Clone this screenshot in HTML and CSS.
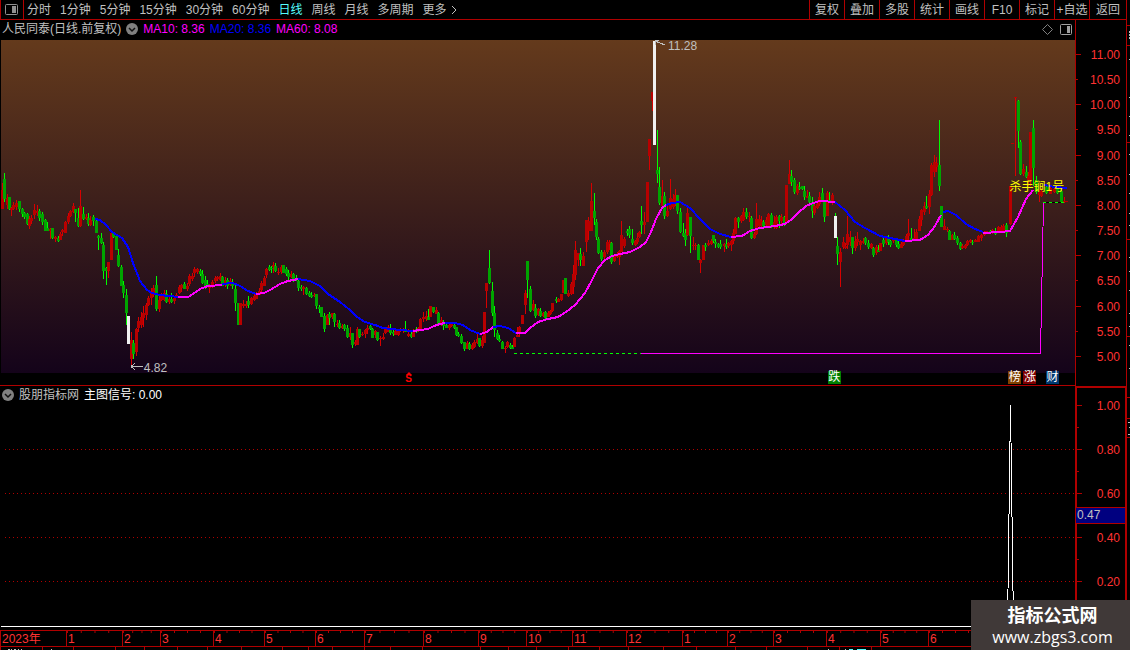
FILE: index.html
```
<!DOCTYPE html>
<html lang="zh-CN">
	<head>
		<meta charset="UTF-8">
		<meta name="viewport" content="width=device-width,initial-scale=1.0">
		<title>人民同泰</title>
		<link rel="stylesheet" href="styles.css">
	</head>
	<body>
		<header class="toolbar">
			<button class="toggle" aria-label="侧栏">
				<svg width="13" height="11" viewBox="0 0 13 11"><rect x="0.5" y="0.5" width="12" height="10" rx="1" fill="none" stroke="#909090"/><rect x="7" y="2" width="4" height="7" fill="#909090"/></svg>
			</button>
			<nav class="periods">
				<button>分时</button>
				<button>1分钟</button>
				<button>5分钟</button>
				<button>15分钟</button>
				<button>30分钟</button>
				<button>60分钟</button>
				<button class="active">日线</button>
				<button>周线</button>
				<button>月线</button>
				<button>多周期</button>
				<button class="more">更多<svg width="6" height="10" viewBox="0 0 6 10"><path d="M1 1L5 5L1 9" fill="none" stroke="#c0c0c0"/></svg></button>
			</nav>
			<div class="tools">
				<button>复权</button>
				<button>叠加</button>
				<button>多股</button>
				<button>统计</button>
				<button>画线</button>
				<button>F10</button>
				<button>标记</button>
				<button>+自选</button>
				<button>返回</button>
			</div>
		</header>

		<main>
			<div class="charts">
				<!-- K线主图 -->
				<section class="panel price">
					<div class="content">
						<div class="info">
							<span>人民同泰(日线.前复权)</span>
							<svg class="drop" width="12" height="12" viewBox="0 0 12 12"><circle cx="6" cy="6" r="6" fill="#808080"/><path d="M3 5L6 8L9 5" fill="none" stroke="#101010" stroke-width="1.5"/></svg>
							<span class="magenta">MA10: 8.36</span>
							<span class="blue">MA20: 8.36</span>
							<span class="magenta">MA60: 8.08</span>
							<span class="info-icons">
								<svg width="11" height="11" viewBox="0 0 11 11"><path d="M5.5 0.5L10.5 5.5L5.5 10.5L0.5 5.5Z" fill="none" stroke="#808080"/></svg>
								<svg width="12" height="11" viewBox="0 0 12 11"><rect x="0.5" y="0.5" width="11" height="10" rx="1" fill="none" stroke="#a0a0a0"/><rect x="7" y="2" width="3" height="7" fill="#a0a0a0"/></svg>
							</span>
						</div>
						<div class="plot">
							<svg id="kline" viewBox="1 40 1074 333" preserveAspectRatio="none">
								<g id="candles"></g>
								<g id="averages"></g>
								<path class="dash" d="M514 353.5H641"/>
								<path class="signal" d="M641 353.5H1040.5L1043.5 202"/>
								<path class="dash-back" d="M1043 202.5H1064"/>
								<path class="dash" d="M1043 202.5H1064"/>
								<path class="arrow" d="M131 366.5H143M131 366.5L135 363.5M131 366.5L135 369.5M655 41L665 45M655 41L659 40.5M655 41L656 45"/>
							</svg>
							<span class="note low">4.82</span>
							<span class="note high">11.28</span>
							<span class="note tip">杀手锏1号</span>
						</div>
						<div class="events">
							<span class="event split">S</span>
							<span class="event fall">跌</span>
							<span class="event list">榜</span>
							<span class="event rise">涨</span>
							<span class="event report">财</span>
						</div>
					</div>
					<ul class="axis">
						<li class="major">11.00</li>
						<li>10.50</li>
						<li class="major">10.00</li>
						<li>9.50</li>
						<li class="major">9.00</li>
						<li>8.50</li>
						<li class="major">8.00</li>
						<li>7.50</li>
						<li class="major">7.00</li>
						<li>6.50</li>
						<li class="major">6.00</li>
						<li>5.50</li>
						<li class="major">5.00</li>
					</ul>
				</section>

				<!-- 副图指标 -->
				<section class="panel sub">
					<div class="content">
						<svg id="signal" viewBox="1 386 1074 244" preserveAspectRatio="none">
							<path class="grid" d="M5 449.5H1075M5 493.5H1075M5 537.5H1075M5 581.5H1075"/>
							<path class="white" d="M1 626.5H1007.500L1010.500 405L1013.500 626.5H1075"/>
						</svg>
						<div class="info">
							<svg class="drop" width="12" height="12" viewBox="0 0 12 12"><circle cx="6" cy="6" r="6" fill="#808080"/><path d="M3 5L6 8L9 5" fill="none" stroke="#101010" stroke-width="1.5"/></svg>
							<span>股朋指标网</span>
							<span class="white-text">主图信号: 0.00</span>
						</div>
					</div>
					<ul class="axis">
						<li class="major">1.00</li>
						<li></li>
						<li class="major">0.80</li>
						<li></li>
						<li class="major">0.60</li>
						<li></li>
						<li class="major">0.40</li>
						<li></li>
						<li class="major">0.20</li>
					</ul>
					<span class="current">0.47</span>
				</section>
			</div>
			<aside class="strip">
				<svg width="3" height="610" viewBox="1127 20 3 610">
					<path d="M1127 25.500h3M1127 45.500h3M1127 142.500h3M1127 239.500h3M1127 336.500h3M1127 397.500h3M1127 418.500h3M1127 437.500h3" stroke="#b00000"/>
					<path d="M1129.500 31v2M1129.500 34v2M1129.500 37v2M1129.500 59v1M1129.500 97v1M1129.500 116v1M1129.500 135v1M1129.500 154v1M1129.500 174v1M1129.500 193v1M1129.500 213v1M1129.500 225v1M1129.500 257v1M1129.500 271v1M1129.500 290v1M1129.500 313v1M1129.500 326v1M1129.500 345v1M1129.500 368v1M1128 422.500h2M1129.500 427v1M1128 434.500h2" stroke="#c0c0c0"/>
				</svg>
			</aside>
		</main>

		<ol class="months">
			<li>2023年</li>
			<li>1</li>
			<li>2</li>
			<li>3</li>
			<li>4</li>
			<li>5</li>
			<li>6</li>
			<li>7</li>
			<li>8</li>
			<li>9</li>
			<li>10</li>
			<li>11</li>
			<li>12</li>
			<li>1</li>
			<li>2</li>
			<li>3</li>
			<li>4</li>
			<li>5</li>
			<li>6</li>
		</ol>
		<footer>
			<svg width="970" height="3" viewBox="0 647 970 3">
				<path d="M.5 647v3M42.500 647v3M73.500 647v3M115.500 647v3M144.500 647v3M177.500 647v3M207.500 647v3M241.500 647v3M282.500 647v3M308.500 647v3M332.500 647v3M364.500 647v3M390.500 647v3M422.500 647v3M480.500 647v3M508.500 647v3M536.500 647v3M568.500 647v3M599.500 647v3M628.500 647v3M663.500 647v3M696.500 647v3M735.500 647v3M766.500 647v3M807.500 647v3M839.500 647v3M871.500 647v3" stroke="#b00000"/>
				<path d="M8 649.500h2M11 649.500h1M14 649.500h2M18 649.500h1M21 649.500h1M51 649.500h1M828 649.500h1M845 649.500h1" stroke="#c0c0c0"/>
				<path d="M849 649.500h4M857 649.500h9" stroke="#54fcfc"/>
			</svg>
		</footer>

		<div class="watermark">
			<strong>指标公式网</strong>
			<span>www.zbgs3.com</span>
		</div>
		<script src="chart.js"></script>
	</body>
</html>
```

FILE: styles.css
```
*{
	padding: 0;
	margin: 0;
	box-sizing: border-box;
}
body{
	display: flex;
	flex-direction: column;
	height: 100vh;
	overflow: hidden;
	background: #000;
	color: #c0c0c0;
	font: 12px/14px "Liberation Sans", "Noto Sans CJK SC", sans-serif;
}
ul, ol{
	list-style: none;
}
svg{
	display: block;
	flex: none;
}
button{
	border: 0;
	background: none;
	color: inherit;
	font: inherit;
	white-space: nowrap;
}

/* 工具栏 */
.toolbar{
	display: flex;
	flex: none;
	height: 20px;
	margin-right: 3px;
	border: solid #b00000;
	border-width: 0 1px 1px;
}
.toggle{
	width: 23px;
	padding-left: 4px;
	border-right: 1px solid #b00000;
}
.periods{
	display: flex;
	flex: 1;
	gap: 9px;
	padding-left: 3px;
}
.periods .active{
	color: #54fcfc;
}
.more{
	display: flex;
	align-items: center;
	gap: 4px;
}
.tools{
	display: flex;
}
.tools button{
	width: 35px;
	border-left: 1px solid #b00000;
}
.tools button:last-child{
	width: 37px;
}

main{
	display: flex;
	flex: 1;
	min-height: 0;
}
.charts{
	display: flex;
	flex: 1;
	flex-direction: column;
	min-width: 0;
}
.panel{
	position: relative;
	display: flex;
	min-height: 0;
}
.price{
	flex: 366 1 0;
}
.sub{
	flex: 244 1 0;
}
.content{
	position: relative;
	display: flex;
	flex: 1;
	flex-direction: column;
	min-width: 0;
}
.price .content{
	border-bottom: 1px solid #b00000;
}
.info{
	display: flex;
	flex: none;
	align-items: center;
	gap: 5px;
	height: 20px;
	padding: 0 3px 2px 2px;
}
.info-icons{
	display: flex;
	gap: 7px;
	margin-left: auto;
}
.magenta{
	color: #f0f;
}
.blue{
	color: #00f;
}
.white-text{
	color: #fff;
}

.plot{
	position: relative;
	flex: 1;
	min-height: 0;
	margin-left: 1px;
	background: linear-gradient(#643a1c, #14031a);
}
.plot svg{
	width: 100%;
	height: 100%;
	shape-rendering: crispEdges;
}
.up{
	fill: #b80000;
}
.up .wick{
	fill: #d80000;
}
.down{
	fill: #00a400;
}
.down .wick{
	fill: #00fc00;
}
.limit{
	fill: #f0f0f0;
}
#averages polyline{
	fill: none;
	stroke: #f0f;
	stroke-width: 2;
}
#averages .fall-line{
	stroke: #00f;
}
.dash, .dash-back, .signal, .arrow{
	fill: none;
	stroke: #0f0;
}
.dash{
	stroke-dasharray: 3 3;
}
.dash-back{
	stroke: #000;
}
.signal{
	stroke: #f0f;
}
.arrow{
	stroke: #c0c0c0;
}
.note{
	position: absolute;
	white-space: nowrap;
}
.low{
	left: 13.3%;
	bottom: -2px;
}
.high{
	left: 62.1%;
	top: -1px;
}
.tip{
	left: 93.9%;
	top: 42%;
	color: #ff0;
}

.events{
	position: relative;
	flex: none;
	height: 12px;
}
.event{
	position: absolute;
	bottom: 1px;
	width: 13px;
	height: 13px;
	color: #fff;
	line-height: 13px;
	text-align: center;
}
.split{
	left: 37.4%;
	bottom: 0;
	color: #f00;
	font-size: 10px;
	font-weight: bold;
}
.split::before{
	content: "";
	position: absolute;
	left: 4px;
	top: 0;
	border: solid transparent;
	border-width: 0 3px 3px;
	border-bottom-color: #f00;
}
.fall{
	left: 77%;
	background: #008000;
}
.list{
	left: 93.8%;
	background: #804000;
}
.rise{
	left: 95.2%;
	background: #800000;
}
.report{
	left: 97.3%;
	background: #003870;
}

/* 右侧刻度 */
.axis{
	display: flex;
	flex: none;
	flex-direction: column;
	justify-content: space-between;
	width: 51px;
	padding: 28px 6px 22px 0;
	border-left: 1px solid #b00000;
	color: #ff3232;
	text-align: right;
}
.axis li{
	position: relative;
	height: 14px;
}
.axis li::before{
	content: "";
	position: absolute;
	left: 0;
	top: 6px;
	width: 2px;
	height: 1px;
	background: #b00000;
}
.axis .major::before{
	width: 5px;
}
.sub .axis{
	padding: 11px 5px 41px 0;
	border: solid #b00000;
	border-width: 2px 1px 0 2px;
}
.current{
	position: absolute;
	right: 1px;
	top: 49.5%;
	width: 49px;
	height: 17px;
	padding-left: 1px;
	border: solid #b00000;
	border-width: 1px 0;
	background: #000080;
	line-height: 15px;
}
.strip{
	flex: none;
	width: 4px;
	border-left: 1px solid #b00000;
	overflow: hidden;
}

#signal{
	position: absolute;
	left: 1px;
	top: 0;
	width: calc(100% - 1px);
	height: 100%;
	shape-rendering: crispEdges;
}
.sub .info{
	position: relative;
	height: 17px;
	padding-bottom: 0;
}
.grid{
	stroke: #b00000;
	stroke-dasharray: 1 3;
}
.white{
	fill: none;
	stroke: #fff;
}

/* 日期轴 */
.months{
	display: grid;
	flex: none;
	grid-template-columns: 66fr 56fr 38fr 53fr 51fr 51fr 49fr 59fr 55fr 48fr 46fr 54fr 56fr 45fr 46fr 53fr 54fr 48fr 202fr;
	height: 17px;
	border: solid #b00000;
	border-width: 1px 0;
	color: #ff3232;
	line-height: 16px;
}
.months li{
	padding-left: 1px;
	border-left: 1px solid #b00000;
}
.months li:not(:first-child){
	background: linear-gradient(90deg, #b00000 1px, transparent 1px) 0 0 / 25% 2px repeat-x;
}
.months li:last-child{
	background-size: 13px 2px;
}
footer{
	flex: none;
	height: 3px;
}

.watermark{
	position: fixed;
	right: 0;
	bottom: 0;
	display: flex;
	flex-direction: column;
	align-items: center;
	width: 159px;
	height: 50px;
	padding: 1px 0 0 4px;
	background: #403938;
	color: #fff;
	font: 16px/21px "Open Sans", "Noto Sans CJK SC", sans-serif;
}
.watermark strong{
	font-family: "Noto Sans CJK SC", sans-serif;
	font-size: 18px;
	line-height: 26px;
}
```

FILE: chart.js
```
// 每根K线: x 最高 实体上 实体下 最低 类型(r涨 g跌 w涨跌停)
var data = `
2 183 190 209 209 r,4 173 179 199 202 g,7 194 198 205 209 r,9 197 197 209 210 g,11 207 208 210 216 r,13 202 205 209 210 r,
16 200 203 207 210 r,19 201 201 209 212 g,22 208 209 214 217 g,24 212 213 217 219 g,27 213 214 224 225 g,29 216 219 226 229 r,
31 215 218 221 224 r,34 204 210 215 219 r,37 205 211 213 216 r,39 209 211 218 221 g,42 212 214 222 225 g,45 219 220 231 231 g,
47 222 228 231 231 g,50 228 229 231 239 r,52 228 228 238 239 g,55 236 237 239 242 r,58 236 238 241 242 g,60 232 234 240 240 r,
62 229 230 232 236 r,65 221 222 233 233 r,68 213 216 222 224 r,70 210 211 216 217 r,73 203 206 212 213 r,75 209 209 213 222 g,
78 208 218 226 227 g,80 190 206 226 227 r,83 207 214 219 220 g,86 214 217 219 220 r,88 213 218 224 226 g,90 216 220 225 226 r,
93 215 217 221 226 g,96 218 221 233 233 g,98 235 236 238 250 g,101 233 238 243 244 g,103 242 245 271 279 g,106 267 268 271 285 g,
108 262 262 271 278 r,111 233 233 260 260 r,113 232 232 237 238 g,116 235 236 250 250 g,118 249 255 266 267 g,121 265 267 286 286 g,
123 281 285 293 298 g,126 289 295 313 325 g,128 316 316 344 344 w,131 332 340 359 365 r,133 340 343 354 359 g,136 328 329 352 356 r,
138 317 321 328 332 r,141 312 317 325 328 r,143 306 313 318 327 r,146 303 305 315 320 r,148 296 298 305 306 r,151 288 293 298 305 r,
153 285 288 295 297 r,156 276 285 309 311 g,159 296 300 309 312 r,161 293 294 300 301 r,164 290 293 300 301 r,166 290 294 302 303 g,
169 297 299 302 304 r,171 293 299 302 303 g,174 297 298 301 304 r,176 293 295 298 298 r,179 285 287 293 294 r,181 284 285 288 292 r,
184 282 284 289 289 g,187 283 286 289 291 r,189 274 276 284 286 r,192 273 276 279 281 r,194 267 269 273 277 r,197 268 269 272 274 r,
200 269 271 274 276 g,202 270 274 283 284 g,205 276 280 286 289 g,207 280 284 287 287 g,209 284 285 288 293 r,212 280 282 286 288 r,
215 276 278 281 283 r,217 276 277 279 281 r,220 273 276 280 281 r,222 276 277 286 286 g,225 277 280 284 287 r,227 278 280 286 289 g,
230 278 281 285 286 r,232 279 282 286 289 g,235 285 289 303 311 g,238 303 303 325 325 g,240 303 303 325 325 r,243 300 304 306 308 r,
246 301 304 306 308 r,248 296 301 305 308 g,251 297 298 304 305 r,254 294 296 300 301 r,256 292 294 299 299 r,259 288 291 295 295 r,
261 281 283 290 294 r,264 276 278 286 286 r,266 268 269 275 278 r,269 265 267 270 271 g,271 266 268 269 273 g,273 262 265 267 273 r,
275 263 266 271 272 g,278 268 272 273 275 r,281 265 267 272 274 r,283 265 265 273 273 g,286 267 269 274 276 g,288 270 273 277 280 g,
291 271 274 277 278 r,293 273 274 280 282 g,296 275 278 280 281 g,298 279 281 288 291 g,301 285 287 289 291 g,303 286 287 289 295 r,
306 287 288 294 295 g,309 291 293 296 297 g,311 292 295 297 298 g,314 293 295 296 297 r,316 294 294 306 309 g,319 305 307 309 313 g,
321 307 307 317 317 g,324 313 316 329 332 g,327 314 315 325 325 r,329 312 314 318 325 g,332 313 313 317 319 r,334 313 314 322 327 g,
337 320 324 325 327 r,339 320 323 328 329 g,342 324 326 328 329 r,344 324 325 329 331 g,347 325 328 337 338 g,350 327 333 337 340 r,
352 333 333 345 348 g,355 340 342 344 346 r,357 327 329 345 345 r,359 329 329 337 338 g,362 332 334 335 336 r,365 329 330 334 338 r,
367 325 328 330 334 r,370 325 326 329 330 g,372 328 329 338 338 g,375 330 331 335 338 r,377 332 332 340 341 g,380 336 338 339 346 r,
383 333 337 339 340 r,385 327 328 333 334 r,388 325 327 332 332 r,390 324 328 333 335 g,393 329 332 334 336 g,395 330 331 335 335 r,
398 330 331 335 336 r,400 328 329 331 332 r,403 328 329 331 333 r,405 321 330 332 332 g,408 329 334 336 337 r,411 332 334 337 338 g,
413 329 331 337 337 r,416 327 329 332 333 g,418 327 328 330 332 r,420 318 319 331 331 r,423 312 317 319 322 r,426 311 316 319 321 r,
428 309 317 320 320 g,430 306 306 317 317 r,433 307 307 312 313 g,436 307 310 314 314 r,438 312 313 325 326 g,441 317 320 325 326 r,
443 320 322 326 330 g,446 322 325 328 328 g,449 324 325 328 330 r,451 322 324 326 327 r,454 323 325 328 329 g,456 327 327 335 336 g,
458 332 334 336 337 g,461 334 336 343 344 g,464 342 342 349 351 g,467 341 343 349 349 r,469 342 344 349 350 g,472 343 345 349 350 r,
474 340 342 347 348 r,477 334 339 343 344 r,479 338 338 346 347 g,482 336 340 346 348 r,484 312 312 343 343 r,486 283 283 291 308 r,
489 250 268 283 284 g,492 282 291 313 316 g,494 306 313 330 337 g,497 330 333 339 340 g,499 335 339 341 342 g,502 341 342 349 349 g,
505 346 348 349 353 r,507 341 342 347 348 r,510 343 345 348 349 g,512 345 347 349 349 g,514 337 338 347 347 r,517 327 335 337 337 r,
519 326 327 334 337 r,522 315 315 324 324 r,525 290 293 305 314 r,527 261 261 280 298 g,530 286 289 311 312 g,533 300 304 310 311 r,
535 304 308 316 318 g,538 308 309 315 316 r,540 308 311 316 317 g,543 312 313 316 317 r,545 311 312 318 319 g,548 311 313 317 317 r,
550 310 311 314 315 r,552 303 303 311 312 r,556 297 299 301 303 g,558 298 299 302 302 r,561 294 294 300 301 r,563 280 280 293 293 r,
565 278 278 294 294 g,568 290 293 296 297 r,571 282 284 294 295 r,573 265 274 287 294 r,575 241 250 275 280 r,578 253 253 260 266 r,
580 248 254 260 266 g,583 252 256 266 266 r,586 220 220 242 252 r,588 217 221 231 240 r,591 183 201 231 231 r,594 193 211 218 225 g,
596 219 222 237 240 g,598 237 239 253 254 g,601 250 252 259 261 g,604 250 252 257 259 r,607 240 242 252 254 r,609 240 242 244 250 r,
611 242 243 262 264 g,614 254 256 261 262 r,617 252 255 257 258 r,619 250 251 257 265 r,621 221 235 252 252 r,624 237 239 246 248 r,
627 229 231 233 236 g,629 226 229 235 238 g,632 229 239 243 245 g,635 240 241 245 246 r,637 233 238 242 244 r,639 231 232 237 238 r,
641 206 221 225 234 g,644 212 222 225 234 r,647 182 182 222 222 r,649 139 139 156 170 r,652 92 92 101 111 r,657 130 170 174 183 g,
654 41 41 145 145 w,659 167 187 203 205 g,662 180 196 206 206 r,664 192 196 216 219 g,667 205 211 216 217 r,670 179 198 209 210 r,
673 194 199 207 209 r,675 189 195 204 206 r,677 195 195 211 214 g,680 208 212 232 233 g,683 223 233 236 237 g,685 229 233 240 246 g,
687 206 213 235 236 r,690 217 217 236 253 g,693 237 245 246 250 r,695 243 245 246 250 r,698 244 245 260 260 g,700 259 260 263 273 r,
703 245 245 260 260 r,705 243 245 247 251 g,708 240 243 245 246 r,711 239 241 244 245 r,713 235 235 241 243 g,715 239 242 244 248 g,
718 243 244 247 248 g,720 240 244 247 249 g,724 243 244 246 252 r,726 239 244 247 249 g,728 242 243 246 248 r,731 240 241 245 251 r,
733 229 233 241 244 r,735 217 218 234 234 r,738 217 218 222 228 g,741 215 216 221 223 r,743 208 212 220 221 r,746 208 212 217 219 g,
749 212 216 217 222 r,751 216 218 238 239 g,754 232 234 238 239 r,756 203 219 234 235 r,759 215 219 226 227 r,761 216 221 226 228 r,
763 220 222 226 227 g,766 217 220 225 226 r,768 213 214 226 227 r,771 213 215 226 228 g,774 216 222 227 229 r,776 215 217 228 229 r,
779 215 216 221 228 g,781 214 217 221 224 r,784 216 217 225 226 g,786 185 185 223 223 r,789 160 174 184 184 r,791 170 176 182 186 g,
794 178 180 192 194 g,797 184 186 193 195 r,799 182 187 189 190 g,802 186 186 189 190 g,804 186 191 197 200 g,807 190 196 198 198 r,
809 192 196 202 205 g,812 197 202 211 218 g,814 204 206 213 215 r,817 200 204 208 209 r,819 192 197 204 206 r,822 188 193 200 201 g,
824 200 200 217 222 g,827 191 193 216 216 r,829 192 200 201 203 g,832 193 195 201 205 r,835 213 216 220 238 g,835 216 216 238 238 w,
837 237 246 254 265 g,840 248 252 262 287 r,843 237 242 247 249 r,845 243 246 248 249 r,847 216 234 245 249 r,850 231 237 242 246 r,
852 237 237 248 254 g,855 236 241 248 251 r,857 232 239 242 246 r,860 240 241 245 250 r,863 238 241 243 244 r,865 237 238 243 245 g,
868 240 243 247 249 g,871 243 244 248 249 r,873 247 248 255 257 g,876 245 247 253 255 r,878 245 250 252 252 g,880 243 243 251 251 r,
883 238 240 244 247 g,886 237 238 243 245 r,888 235 237 242 245 g,890 240 241 245 247 g,893 239 240 241 243 r,896 240 240 245 247 g,
898 241 244 248 249 g,901 242 244 248 248 r,903 239 240 245 246 r,906 234 236 241 242 r,908 219 233 236 242 r,911 228 238 240 240 g,
914 229 238 240 240 r,916 229 232 240 241 r,919 216 219 231 231 r,921 209 210 220 226 r,924 202 206 212 215 r,926 196 206 208 209 g,
929 190 194 207 214 r,931 163 165 195 196 r,934 155 162 172 177 r,936 157 163 167 172 r,939 120 165 186 191 g,941 206 206 227 227 g,
944 219 226 230 230 r,947 227 229 230 232 r,949 230 231 240 240 g,952 234 235 240 240 r,954 232 235 239 240 g,957 236 238 243 245 g,
960 242 243 249 250 g,962 244 246 248 249 r,965 244 245 248 249 r,967 240 241 245 246 r,970 239 240 242 243 r,972 240 242 243 245 g,
975 239 240 242 242 r,978 235 236 242 242 r,981 234 235 238 241 r,984 231 232 235 236 r,986 231 231 233 234 r,990 230 231 233 234 g,
992 229 230 233 234 r,995 228 232 234 235 g,998 226 227 232 233 r,1001 225 227 231 232 r,1003 224 226 231 231 r,1006 223 225 233 237 g,
1010 186 186 224 225 r,1012 143 143 144 144 r,1015 97 97 98 176 r,1018 100 101 131 148 g,1020 140 142 174 175 g,1023 164 169 174 176 r,
1026 166 172 177 178 g,1028 172 176 180 186 r,1030 132 132 180 186 r,1033 120 128 168 186 g,1036 176 180 192 194 g,1039 190 192 195 202 r,
1041 188 191 196 197 r,1046 185 187 193 194 g,1050 187 188 194 194 r,1054 187 189 192 193 r,1057 186 188 193 194 g,1061 190 191 202 202 g,
1064 197 201 202 203 r,1066 201 201 202 202 r`;

// 均线分段: 颜色 + 坐标点
var lines = [
	["b", "95,219 100,220 106,225 112,232 122,238 128,247 133,263 140,281 147,290 152,293 160,295 178,297"],
	["m", "178,297 188,297 193,294 200,289 208,286 222,285"],
	["b", "222,284 233,283 240,286 248,291 256,294"],
	["m", "256,294 264,293 270,290 280,284 288,281 298,279"],
	["b", "298,279 310,281 320,286 328,294 340,302 350,310 357,317 365,322 375,325 383,328 400,330 413,331"],
	["m", "413,331 420,330 428,329 434,326 440,324 445,323"],
	["b", "445,323 455,323 463,325 470,330 480,334"],
	["m", "480,334 487,332 493,327"],
	["b", "493,327 500,326 508,328 516,333"],
	["m", "516,333 525,333 530,328 538,322 548,319 558,317 566,312 575,305 585,293 592,280 598,268 605,260 612,256 620,254 630,252 640,247 646,242 651,232 656,219 662,208 666,205"],
	["b", "666,205 672,203 680,202 690,208 700,219 710,229 720,234 731,237"],
	["m", "731,237 742,236 750,231 760,228 775,226 785,224 792,219 798,213 806,206 813,203 820,201 835,202"],
	["b", "835,202 845,210 855,222 865,228 880,236 890,238 905,241"],
	["m", "905,241 920,240 928,235 935,226 941,215"],
	["b", "943,212 948,211 956,215 966,224 975,229 983,232"],
	["m", "983,233 1000,232 1010,231 1018,217 1026,199 1033,190"],
	["b", "1044,185 1055,187 1067,188"]
];

var names = {r: "up", g: "down", w: "limit"};

document.querySelector("#candles").innerHTML = data.split(",").map(function(item){
	var d = item.trim().split(" ");
	var x = +d[0];
	return '<g class="' + names[d[5]] + '">' +
		'<rect class="wick" x="' + x + '" y="' + d[1] + '" width="1" height="' + (d[4] - d[1]) + '"/>' +
		'<rect x="' + (x - 1) + '" y="' + d[2] + '" width="3" height="' + (d[3] - d[2]) + '"/></g>';
}).join("");

document.querySelector("#averages").innerHTML = lines.map(function(line){
	return '<polyline class="' + (line[0] == "b" ? "fall-line" : "rise-line") + '" points="' + line[1] + '"/>';
}).join("");
```
